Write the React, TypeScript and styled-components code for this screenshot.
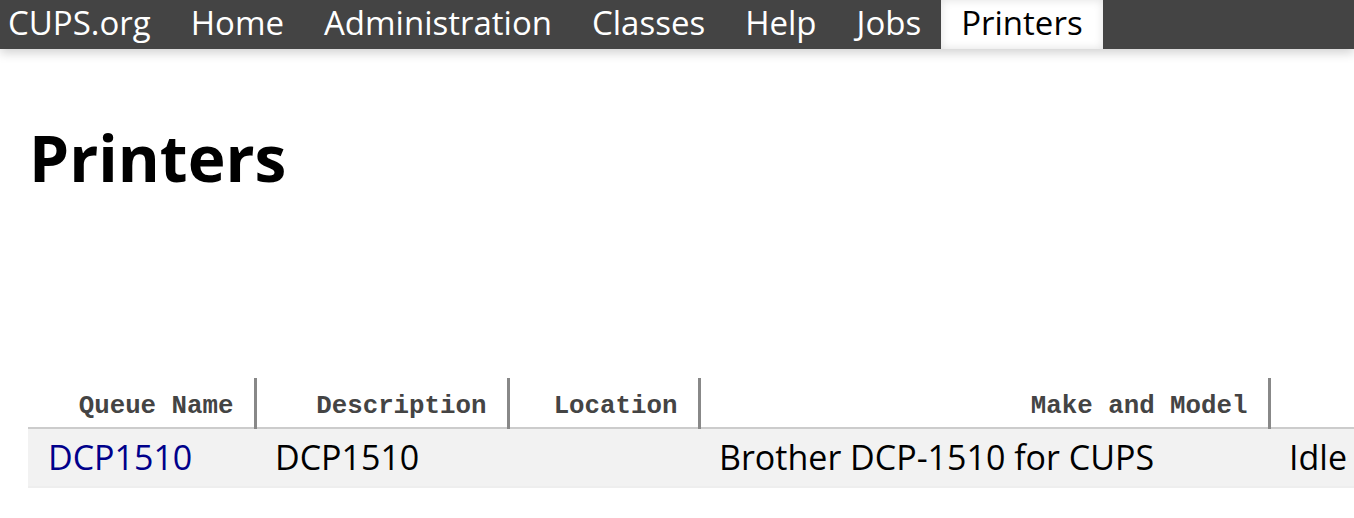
import React from "react";
import styled, { createGlobalStyle } from "styled-components";

const Global = createGlobalStyle`
  html, body { margin: 0; padding: 0; background: #fff; }
  body { font-family: "Open Sans", "DejaVu Sans", sans-serif; color: #000; overflow: hidden; }
`;

const NavBar = styled.nav`
  display: flex;
  align-items: stretch;
  height: 49px;
  background: #444;
  box-shadow: 0 4px 10px rgba(0, 0, 0, 0.18);
  position: relative;
  z-index: 1;
`;

const NavItem = styled.a<{ $active?: boolean; $first?: boolean }>`
  display: flex;
  align-items: center;
  padding: 0 20px 3px ${(p) => (p.$first ? "8px" : "20px")};
  font-size: 33px;
  line-height: 46px;
  color: ${(p) => (p.$active ? "#000" : "#fff")};
  background: ${(p) => (p.$active ? "#fff" : "transparent")};
  box-shadow: ${(p) => (p.$active ? "inset 0 0 10px rgba(0,0,0,0.12)" : "none")};
  text-decoration: none;
  white-space: nowrap;
`;

const Main = styled.main`
  padding: 0 0 0 28px;
`;

const Heading = styled.h1`
  margin: 0;
  padding: 67px 0 0 1px;
  font-size: 64px;
  font-weight: 700;
  line-height: 1.3;
`;

const Table = styled.table`
  margin-top: 179px;
  border-collapse: collapse;
  width: 1600px;
  table-layout: fixed;
`;

const HeadCell = styled.th<{ $w: number; $last?: boolean }>`
  width: ${(p) => p.$w}px;
  height: 50px;
  padding: 0 20px 6px 0;
  box-sizing: border-box;
  text-align: right;
  vertical-align: bottom;
  font-family: "Liberation Mono", "Courier New", monospace;
  font-weight: 700;
  font-size: 25.8px;
  color: #444;
  border-right: ${(p) => (p.$last ? "none" : "3px solid #888")};
  border-bottom: 2px solid #ccc;
`;

const Row = styled.tr`
  background: #f2f2f2;
  border-bottom: 2px solid #eee;
`;

const Cell = styled.td`
  height: 55px;
  padding: 0 0 2px 20px;
  font-size: 34px;
  white-space: nowrap;
  vertical-align: middle;
`;

const QueueLink = styled.a`
  color: #00008b;
  text-decoration: none;
`;

const navItems = ["CUPS.org", "Home", "Administration", "Classes", "Help", "Jobs", "Printers"];

export default function App() {
  return (
    <>
      <Global />
      <NavBar>
        {navItems.map((n, i) => (
          <NavItem key={n} $first={i === 0} $active={n === "Printers"}>
            {n}
          </NavItem>
        ))}
      </NavBar>
      <Main>
        <Heading>Printers</Heading>
        <Table>
          <thead>
            <tr>
              <HeadCell $w={227}>Queue Name</HeadCell>
              <HeadCell $w={253}>Description</HeadCell>
              <HeadCell $w={191}>Location</HeadCell>
              <HeadCell $w={570}>Make and Model</HeadCell>
              <HeadCell $w={359} $last></HeadCell>
            </tr>
          </thead>
          <tbody>
            <Row>
              <Cell>
                <QueueLink href="#">DCP1510</QueueLink>
              </Cell>
              <Cell>DCP1510</Cell>
              <Cell></Cell>
              <Cell>Brother DCP-1510 for CUPS</Cell>
              <Cell>Idle</Cell>
            </Row>
          </tbody>
        </Table>
      </Main>
    </>
  );
}
